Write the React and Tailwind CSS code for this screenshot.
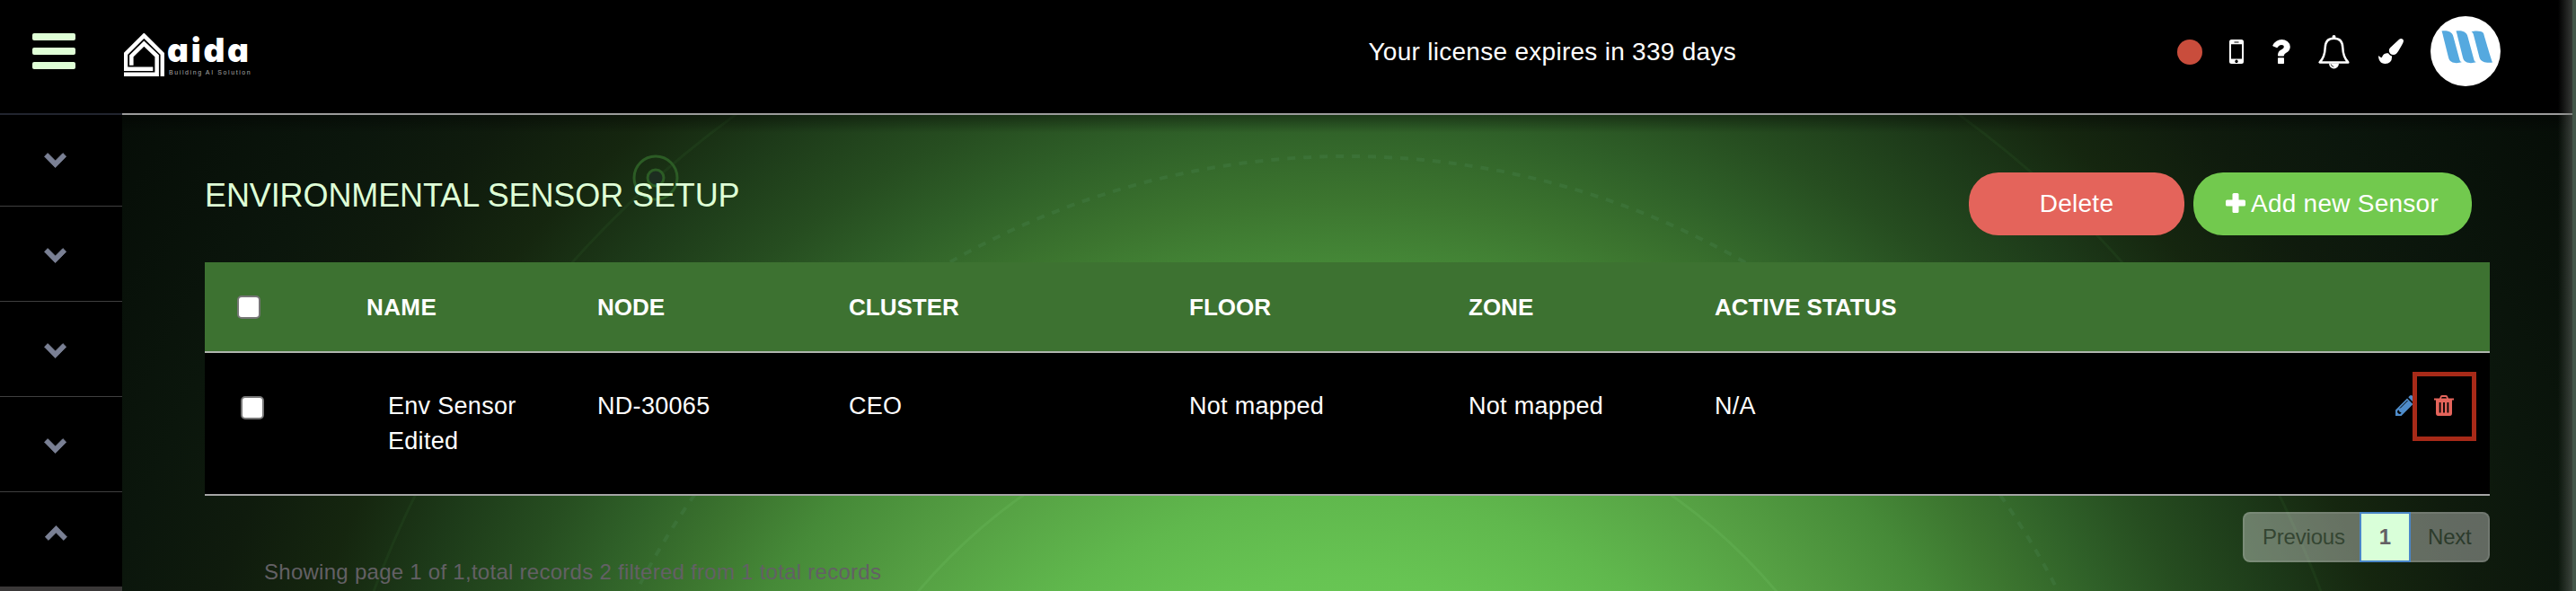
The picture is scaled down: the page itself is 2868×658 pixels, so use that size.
import React from "react";

const Chevron = ({ up }) => (
  <svg width="26" height="18" viewBox="0 0 26 18" className={up ? "rotate-180" : ""}>
    <path d="M0.5 4.2 L4.2 0.6 L12.600 9 L21 0.6 L24.700 4.2 L12.600 16.600 Z" fill="#7a8094" stroke="#7a8094" strokeWidth="0.8" strokeLinejoin="round" />
  </svg>
);

const Logo = () => (
  <div className="mt-[37px] ml-[2px] flex items-start">
    <svg width="45" height="48" viewBox="414 111 135 144" fill="none" stroke="#fff" strokeWidth="13.500">
      <path d="M542.500 255V180L481 119L420 180V230H511" />
      <path d="M439 218V187L481 146L524 187V248H414" />
    </svg>
    <div className="ml-[3px] flex flex-col text-white">
      <span className="h-[40px] w-[96px] font-['Inter'] text-[37px] leading-[38px] font-black tracking-[2.8px] [font-feature-settings:'cv11']">aida</span>
      <span className="-mt-[1px] ml-[2px] font-['Liberation_Sans'] text-[7px] leading-[9px] whitespace-nowrap tracking-[1.6px] text-[#aaa]">Building AI Solution</span>
    </div>
  </div>
);

const Phone = () => (
  <svg width="16" height="27" viewBox="0 0 16 27" className="mt-[44px] ml-[30px]">
    <path fillRule="evenodd" fill="#fff" d="M2.5 0h11A2.5 2.5 0 0 1 16 2.500v22a2.500 2.500 0 0 1-2.500 2.500h-11A2.500 2.500 0 0 1 0 24.500v-22A2.500 2.500 0 0 1 2.500 0zM2 5.300v16.200h12V5.300zM5.500 2.500v1h5v-1zM8 22.600a1.700 1.700 0 1 0 .01 0z" />
  </svg>
);

const Question = () => (
  <svg width="20" height="27" viewBox="0 0 20 27" className="mt-[44px] ml-[32px]" fill="#fff">
    <path d="M0.300 6.500Q3.800 0 10.300 0Q14 0 16.900 2.300Q19.800 4.700 19.800 8Q19.800 10.500 18.500 12.200Q17.300 13.700 15 15Q13 16.200 13 17.600Q13 18.600 12.200 18.600H6.800Q6 18.600 6 17.600Q6 14.500 7.500 13Q8.500 12 10.400 11.100Q12.800 9.900 12.800 8.300Q12.800 6 10 6Q8.600 6 7.700 6.700Q6.800 7.400 5.800 8.800Q5.200 9.500 4.500 9L0.800 7.500Q0 7 0.300 6.500Z" />
    <rect x="6" y="20.300" width="7" height="6.700" rx="0.800" />
  </svg>
);

const Bell = () => (
  <svg width="35" height="38" viewBox="0 0 35 38" className="mt-[39px] ml-[31px]" fill="none" stroke="#fff" strokeWidth="2.500">
    <path d="M17.500 3.800C11 3.800 7.900 7.900 7.700 14C7.500 22 5.300 26.500 1.700 30.400H33.300C29.700 26.500 27.500 22 27.300 14C27.100 7.900 24 3.800 17.500 3.800Z" strokeLinejoin="round" />
    <circle cx="17.500" cy="2" r="2" fill="#fff" stroke="none" />
    <path d="M12 31.500a5.500 6 0 0 0 11 0z" fill="#fff" stroke="none" />
    <path d="M14.300 32.500a3.200 3.200 0 0 0 3 2.800" stroke="#000" strokeWidth="0.800" />
  </svg>
);

const Brush = () => (
  <svg width="28" height="28" viewBox="0 0 1792 1792" className="mt-[43px] ml-[32px]" fill="#fff">
    <path d="M1615 0q70 0 122.500 46.500t52.500 116.500q0 63-45 151-332 629-465 752-97 91-218 91-126 0-216.500-92.500t-90.500-219.500q0-128 92-212l638-579q59-54 130-54zm-909 1034q39 76 106.500 130t150.500 76l1 71q4 213-129.500 347t-348.500 134q-123 0-218-46.500t-152.500-127.500-86.500-183-29-220q7 5 41 30t62 44.500 59 36.500 46 17q41 0 55-37 25-66 57.500-112.500t69.500-76 88-47.500 103-25.500 125-10.500z" />
  </svg>
);

const Avatar = () => (
  <div className="mt-[18px] ml-[30px] h-[78px] w-[78px] overflow-hidden rounded-full bg-white">
    <svg width="78" height="78" viewBox="0 0 78 78" fill="#55a9df">
      <path id="wave" d="M12.500 16.500C17 16 24 16 25.500 23L32 47C32.700 50 33.500 51 35 51C30 53 21.500 53 20 46L14 22C13.500 19.500 13 18 12.500 16.500Z" />
      <use href="#wave" x="16" />
      <path d="M45.500 17.500C49 16 57 16 59 19C60.500 24 66 43 69 51.500C64 52.200 56 52 54.500 46L48 21C47.500 19 47 18 45.500 17.500Z" />
    </svg>
  </div>
);

const Backdrop = () => (
  <svg className="absolute inset-0" width="2728" height="530" viewBox="136 128 2728 530" fill="none">
    <circle cx="1500" cy="1063" r="1157" stroke="#3c7a34" strokeOpacity="0.130" strokeWidth="3" />
    <circle cx="1500" cy="1063" r="889" stroke="#6fae88" strokeOpacity="0.120" strokeWidth="4" strokeDasharray="9 9" />
    <circle cx="1500" cy="1063" r="626" stroke="#7fd070" strokeOpacity="0.170" strokeWidth="3" />
    <circle cx="730" cy="198" r="24" stroke="#2c5c25" strokeWidth="3" />
    <circle cx="730" cy="198" r="9" fill="#1c2d20" stroke="#2c5c25" strokeWidth="3" />
  </svg>
);

const Checkbox = ({ className }) => (
  <span className={`block h-[26px] w-[26px] rounded-[5px] border-2 border-[#767676] bg-white ${className}`} />
);

const columns = "grid grid-cols-[180px_257px_280px_379px_311px_274px_1fr]";

export default function App() {
  return (
    <div className="relative flex h-[658px] w-[2868px] overflow-hidden bg-black font-['Liberation_Sans',Arial,sans-serif]">
      <aside className="flex w-[136px] shrink-0 flex-col">
        <div className="flex h-[128px] flex-col gap-2 border-b-2 border-[#22252f] pt-[37px] pl-9">
          <i className="h-2 w-12 rounded-[2px] bg-[#dfffd6]" />
          <i className="h-2 w-12 rounded-[2px] bg-[#dfffd6]" />
          <i className="h-2 w-12 rounded-[2px] bg-[#dfffd6]" />
        </div>
        <div className="h-[102px] border-b border-[#3f3f3f] pt-[42px] pl-[49px]"><Chevron /></div>
        <div className="h-[106px] border-b border-[#3f3f3f] pt-[46px] pl-[49px]"><Chevron /></div>
        <div className="h-[106px] border-b border-[#3f3f3f] pt-[46px] pl-[49px]"><Chevron /></div>
        <div className="h-[106px] border-b border-[#3f3f3f] pt-[46px] pl-[49px]"><Chevron /></div>
        <div className="h-[105px] pt-[36px] pl-[49px]"><Chevron up /></div>
        <div className="h-[5px] bg-[#3a3838]" />
      </aside>

      <div className="flex w-[2728px] shrink-0 flex-col">
        <header className="flex h-[128px] items-start border-b-2 border-[#9c9c9c]">
          <Logo />
          <p className="mt-[42px] ml-auto text-[28px] leading-8 tracking-[0.28px] whitespace-nowrap text-white">Your license expires in 339 days</p>
          <div className="ml-[491px] flex items-start pr-20">
            <span className="mt-[44px] h-7 w-7 rounded-full bg-[#c94d3c]" />
            <Phone />
            <Question />
            <Bell />
            <Brush />
            <Avatar />
          </div>
        </header>

        <main className="relative h-[530px] overflow-hidden bg-[radial-gradient(circle_at_1364px_935px,#6acb55_330px,#67c453_420px,#60b84d_511px,#559f43_640px,#468a38_760px,#3c752f_840px,#2f6028_930px,#264d20_1010px,#1d3a19_1110px,#15260f_1210px,#0f1b0d_1320px,#0b160c_1430px,#060d07_1650px)]">
          <Backdrop />
          <div className="absolute inset-x-0 top-0 h-[20px] bg-linear-to-b from-black/40 to-transparent" />
          <div className="relative mr-[92px] ml-[92px] flex flex-col">
            <div className="flex h-[164px] items-start justify-between">
              <h1 className="mt-[70px] text-[36px] leading-10 tracking-[-0.1px] whitespace-nowrap text-[#dfffd6]">ENVIRONMENTAL SENSOR SETUP</h1>
              <div className="mt-16 mr-5 flex gap-[10px] text-[28px] tracking-[0.25px] text-white">
                <button className="h-[70px] w-[240px] rounded-[33px] bg-[#e4645b]">Delete</button>
                <button className="flex h-[70px] w-[310px] items-center rounded-[33px] bg-[#72c94e] pl-9 whitespace-nowrap">
                  <svg width="22" height="22" viewBox="0 0 22 22" className="mr-[6px] -mt-[3px]" fill="#fff">
                    <rect x="7.500" width="7" height="22" rx="1.500" />
                    <rect y="7.500" width="22" height="7" rx="1.500" />
                  </svg>
                  Add new Sensor
                </button>
              </div>
            </div>

            <div className={`${columns} h-[101px] items-start border-b-2 border-[#b0b5ae] bg-[#3d7231] text-[26px] leading-[30px] font-bold text-white`}>
              <Checkbox className="mt-[37px] ml-9" />
              <span className="mt-[35px] tracking-[0.4px]">NAME</span>
              <span className="mt-[35px]">NODE</span>
              <span className="mt-[35px]">CLUSTER</span>
              <span className="mt-[35px]">FLOOR</span>
              <span className="mt-[35px]">ZONE</span>
              <span className="mt-[35px]">ACTIVE STATUS</span>
            </div>

            <div className={`${columns} h-[159px] items-start border-b-2 border-[#a5a5a5] bg-black pt-10 text-[27px] leading-[39px] tracking-[0.3px] text-white`}>
              <Checkbox className="mt-2 ml-10" />
              <span className="w-[180px] pl-6">Env Sensor Edited</span>
              <span>ND-30065</span>
              <span>CEO</span>
              <span>Not mapped</span>
              <span>Not mapped</span>
              <div className="flex items-start justify-between">
                <span>N/A</span>
                <div className="-mt-[19px] mr-[15px] flex items-start">
                  <svg width="23" height="23" viewBox="0 0 23 23" className="mt-[26px] -mr-[4px]">
                    <path fill="#4e8cca" d="M0 16.500L13 3.500L19.500 10L6.500 23H0zM14.300 2.200L16 .5Q17.500-.5 19 .8L22.300 4Q23.200 5.500 22.200 7L20.600 8.700z" />
                    <path d="M5 14.500L13.500 6" stroke="#000" strokeWidth="1" />
                    <path d="M2.500 17L3.800 16.500L4.500 18.500L6.500 19.300L6 20.500L4 21L2 19z" fill="#000" />
                  </svg>
                  <div className="relative flex h-[77px] w-[71px] border-[5px] border-[#a82a18] bg-black pt-[21px] pl-[19px]">
                    <svg width="22" height="23" viewBox="0 0 22 23" fill="#e4645b">
                      <path fillRule="evenodd" d="M0 3.500H6L7 1.200Q7.500 0 9 0H13Q14.500 0 15 1.200L16 3.500H22V5.500H20V20Q20 23 17.500 23H4.500Q2 23 2 20V5.500H0zM8 3.500H14L13.300 2H8.700zM5.700 8V19.500H7.500V8zM10.100 8V19.500H11.900V8zM14.500 8V19.500H16.300V8z" />
                    </svg>
                  </div>
                </div>
              </div>
            </div>

            <div className="flex items-start justify-between">
              <p className="mt-[69px] ml-[66px] text-[24px] leading-8 whitespace-nowrap tracking-[0.27px] text-[#636065]">Showing page 1 of 1,total records 2 filtered from 1 total records</p>
              <div className="mt-[18px] flex h-14 w-[275px] text-[24px] leading-[51px]">
                <span className="w-[130px] rounded-l-[8px] border-2 border-r-0 border-white/10 bg-white/35 pl-5 tracking-[-0.2px] text-[#344532]">Previous</span>
                <span className="w-[57px] border-2 border-[#4a86c8] bg-[#d9ffd9] text-center font-bold text-[#636065]">1</span>
                <span className="flex-1 rounded-r-[8px] border-2 border-l-0 border-white/10 bg-white/35 pl-[19px] tracking-[-0.2px] text-[#2c3b2c]">Next</span>
              </div>
            </div>
          </div>
        </main>
      </div>

      <div className="w-1 shrink-0 bg-[#44564a]" />
      <div className="absolute top-0 right-1 h-full w-4 bg-linear-to-r from-transparent to-[#6b706b]/50" />
    </div>
  );
}
